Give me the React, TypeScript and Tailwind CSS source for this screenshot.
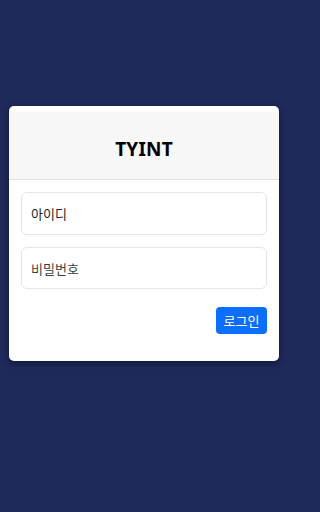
import React from "react";

export default function App() {
  return (
    <div
      className="min-h-[512px] w-full bg-[#1f2a5b] px-[9px] pt-[106px]"
      style={{ fontFamily: '"Noto Sans", "Noto Sans CJK KR", sans-serif' }}
    >
      <div className="w-[270px] overflow-hidden rounded-[5px] bg-white pt-[6px] shadow-[0_2px_6px_rgba(5,10,40,0.6)]">
        <div className="flex h-[68px] items-center justify-center border-b border-[#e0e0e0] bg-[#f7f7f7] pt-[8px]">
          <h1 className="text-[19px] font-bold tracking-[0.2px] text-black">TYINT</h1>
        </div>
        <div className="flex flex-col px-[12px] pb-[27px] pt-[12px]">
          <input
            type="text"
            placeholder="아이디"
            className="h-[43px] w-full rounded-[6px] border border-[#e3e5e8] bg-white px-[9px] text-[13px] text-[#212529] placeholder:text-[#1a1d20] outline-none"
            style={{ fontFamily: '"Noto Sans CJK KR", sans-serif' }}
          />
          <input
            type="password"
            placeholder="비밀번호"
            className="mt-[12px] h-[42px] w-full rounded-[6px] border border-[#e3e5e8] bg-white px-[9px] text-[13px] text-[#212529] placeholder:text-[#3a3f44] outline-none"
            style={{ fontFamily: '"Noto Sans CJK KR", sans-serif' }}
          />
          <div className="mt-[18px] flex justify-end">
            <button
              className="h-[27px] w-[51px] rounded-[4px] bg-[#0d6efd] text-[13px] text-white"
              style={{ fontFamily: '"Noto Sans CJK KR", sans-serif' }}
            >
              로그인
            </button>
          </div>
        </div>
      </div>
    </div>
  );
}
